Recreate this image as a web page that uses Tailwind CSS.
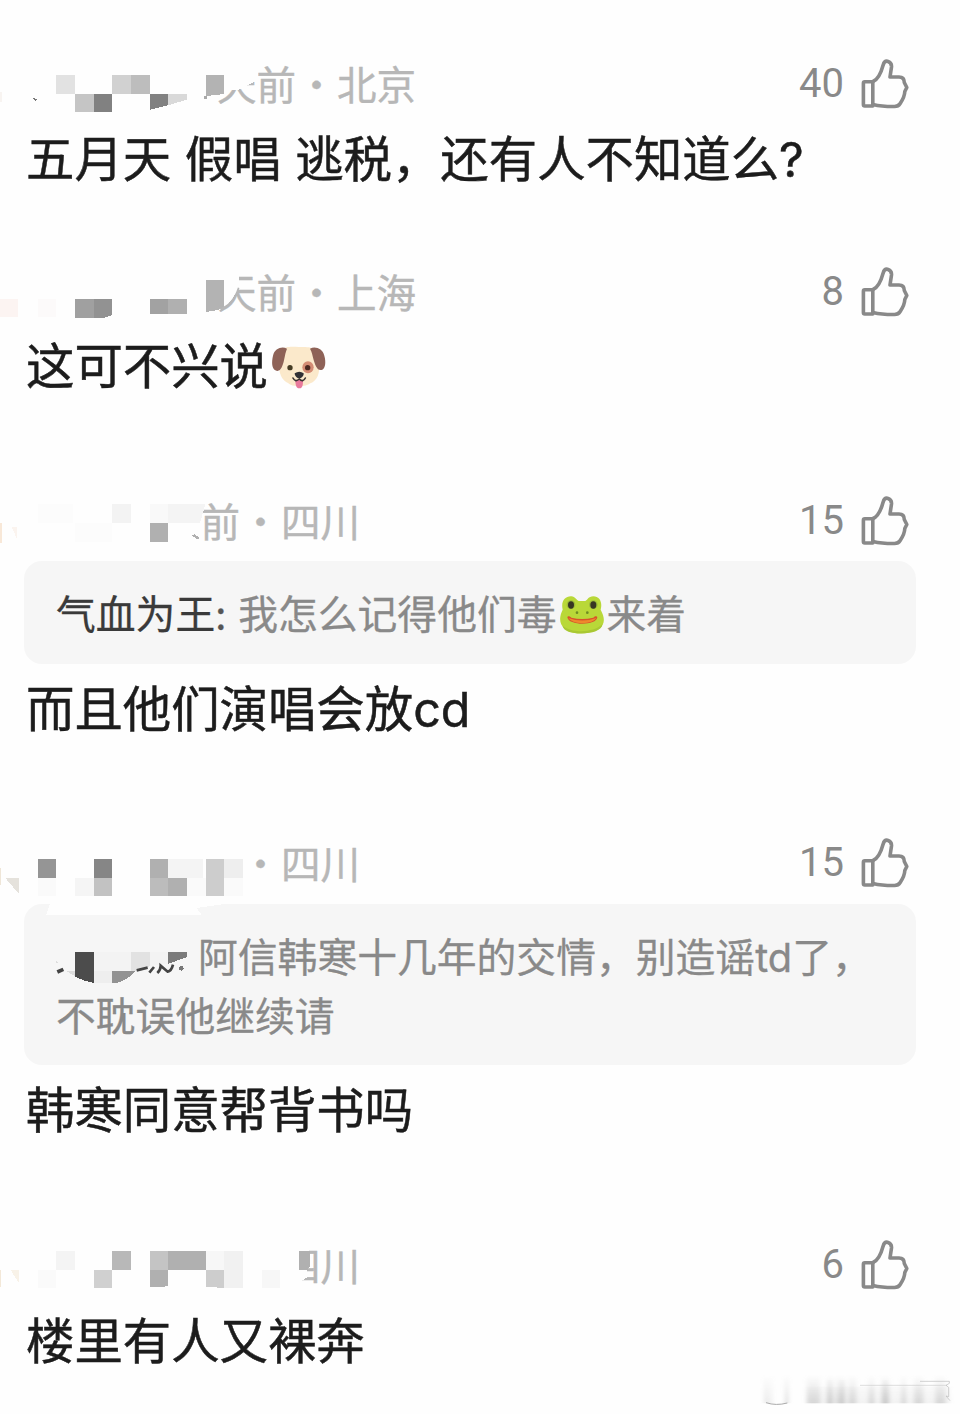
<!DOCTYPE html>
<html lang="zh-CN">

<head>
  <meta charset="UTF-8">
  <meta name="viewport" content="width=device-width, initial-scale=1.0">
  <title>评论</title>
  <script src="https://cdn.jsdelivr.net/npm/@tailwindcss/browser@4"></script>
</head>

<body class="bg-[#fefefe] font-['Noto_Sans_CJK_SC',sans-serif] text-[#1c1c1c]">

  <!-- shared like icon -->
  <svg class="hidden">
    <symbol id="thumb" viewBox="0 0 48 50">
      <g fill="none" stroke="#898989" stroke-width="3.6" stroke-linejoin="round" stroke-linecap="round">
        <path d="M3.8 22.7H11.8V47H3.8Q2.4 47 2.4 45.5V24.2Q2.4 22.7 3.8 22.7Z" />
        <path d="M12 22.5C17 20.5 20 14 22 6.5C23 2.5 24.5 1.8 26.5 2.3C29 3 30.8 4.5 30.5 8L29 18H38C41.5 18 43.3 20 43.3 23.5L45.8 28.5L43.8 32.5C43.7 37 41.5 41 39.2 44.5C37.8 46.8 36 47.5 33.5 47.5C25 47.6 18.5 47 12 45.4" />
      </g>
    </symbol>
  </svg>

  <main class="w-[960px] h-[1414px] flex flex-col overflow-hidden pt-[56px]">

    <section class="h-[208px]">
      <div class="relative h-[58px] flex items-center justify-between pr-[51px]">
        <div class="w-[416px] pb-[5px] flex justify-end text-[39.5px] leading-none text-[#b7b7b7] [-webkit-text-stroke:0.4px]">
          <span>天前</span><span class="w-[41px] text-center">·</span><span>北京</span>
        </div>
        <div class="flex items-center gap-[17px] pb-[2px]">
          <span class="font-[Roboto,sans-serif] text-[40px] leading-none text-[#898989]">40</span>
          <svg class="w-12 h-[50px]"><use href="#thumb" /></svg>
        </div>
        <svg class="absolute left-0 top-0 w-[430px] h-[58px]" viewBox="0 3 1290 174" shape-rendering="crispEdges">
          <path d="M600 0H774V76L745 90L722 103L690 106L652 132H600Z" fill="#fefefe" />
          <path d="M0 110h5v30H0z" fill="#f8f4f1" />
          <path d="M168 60h57v57h-57z" fill="#e2e2e2" />
          <path d="M225 117h57v54h-57z" fill="#c5c5c5" />
          <path d="M282 117h54v54h-54z" fill="#818181" />
          <path d="M336 60h57v57h-57z" fill="#d1d1d1" />
          <path d="M393 60h57v57h-57z" fill="#bdbdbd" />
          <path d="M450 117h54v34l-54 13z" fill="#818181" />
          <path d="M504 117h57v17l-57 17z" fill="#d9d9d9" />
          <path d="M618 60h54v57l-54 6z" fill="#b3b3b3" />
          <path d="M96 128l15 4-4 6z" fill="#777" />
          <path d="M612 124l10 0-2 8-7 -1z" fill="#aaa" />
          <path d="M752 86l10-6v4l-8 3z" fill="#bbb" />
        </svg>
      </div>
      <p class="mt-[14px] pl-[26px] h-16 leading-[64px] font-[Inter,'Noto_Sans_CJK_SC',sans-serif] text-[48.4px] [-webkit-text-stroke:0.5px] whitespace-nowrap">五月天 假唱 逃税，还有人不知道么?</p>
    </section>

    <section class="h-[229px]">
      <div class="relative h-[58px] flex items-center justify-between pr-[51px]">
        <div class="w-[416px] pb-[5px] flex justify-end text-[39.5px] leading-none text-[#b7b7b7] [-webkit-text-stroke:0.4px]">
          <span>天前</span><span class="w-[41px] text-center">·</span><span>上海</span>
        </div>
        <div class="flex items-center gap-[17px] pb-[2px]">
          <span class="font-[Roboto,sans-serif] text-[40px] leading-none text-[#898989]">8</span>
          <svg class="w-12 h-[50px]"><use href="#thumb" /></svg>
        </div>
        <svg class="absolute left-0 top-0 w-[430px] h-[58px]" viewBox="0 -3 1290 174" shape-rendering="crispEdges">
          <path d="M600 0H716V68L700 98L684 118L660 136H600Z" fill="#fefefe" />
          <path d="M0 102h54v54H0z" fill="#fcf4f2" />
          <path d="M114 102h54v54h-54z" fill="#fcfafa" />
          <path d="M225 102h57v57h-57z" fill="#a0a0a0" />
          <path d="M282 102h54v48l-24 9h-30z" fill="#929292" />
          <path d="M450 102h54v44h-54z" fill="#a2a2a2" />
          <path d="M504 102h57v44h-57z" fill="#b0b0b0" />
          <path d="M618 45h54v84l-28 8-26 4z" fill="#b3b3b3" />
          <path d="M660 132C692 122 706 98 716 68" fill="none" stroke="#b7b7b7" stroke-width="5" shape-rendering="auto" />
        </svg>
      </div>
      <div class="mt-[13px] pl-[26px] h-16 flex items-center">
        <p class="leading-[64px] font-[Inter,'Noto_Sans_CJK_SC',sans-serif] text-[48.4px] [-webkit-text-stroke:0.5px]">这可不兴说</p>
        <svg class="ml-[3px] w-[56px] h-[45px]" viewBox="32 30 168 135">
          <path d="M62 48C75 32 95 36 116 36C138 36 156 34 169 50C180 84 184 132 150 145C136 157 96 157 83 144C52 130 52 84 62 48Z" fill="#fbe9cb" />
          <ellipse cx="143" cy="97" rx="17" ry="18" fill="#d48c74" />
          <path d="M80 41C65 33 43 40 38 62C33 83 35 100 45 106C60 114 67 94 71 76C74 61 76 50 80 41Z" fill="#8e6257" />
          <path d="M149 41C164 33 187 40 192 62C198 83 194 100 186 104C171 110 165 91 160 75C156 61 155 50 149 41Z" fill="#8e6257" />
          <path d="M105 137C106 158 111 160 118 160C126 159 128 151 128 137L117 132Z" fill="#e8799c" />
          <circle cx="89" cy="98" r="8" fill="#453c24" />
          <circle cx="142" cy="98" r="8" fill="#4b2820" />
          <path d="M103 115Q117 106 130 115Q131 124 120 130H113Q103 124 103 115Z" fill="#303035" />
          <path d="M98 129Q105 143 117 132Q128 143 135 129" fill="none" stroke="#3a3432" stroke-width="5" stroke-linecap="round" />
        </svg>
      </div>
    </section>

    <section class="h-[342px]">
      <div class="relative h-[58px] flex items-center justify-between pr-[51px]">
        <div class="w-[360px] pb-[5px] flex justify-end text-[39.5px] leading-none text-[#b7b7b7] [-webkit-text-stroke:0.4px]">
          <span>前</span><span class="w-[41px] text-center">·</span><span>四川</span>
        </div>
        <div class="flex items-center gap-[17px] pb-[2px]">
          <span class="font-[Roboto,sans-serif] text-[40px] leading-none text-[#898989]">15</span>
          <svg class="w-12 h-[50px]"><use href="#thumb" /></svg>
        </div>
        <svg class="absolute left-0 top-0 w-[430px] h-[58px]" viewBox="0 9 1290 174" shape-rendering="crispEdges">
          <path d="M0 100h5v60H0z" fill="#f8e8d8" />
          <path d="M34 110h16v34z" fill="#fbf4ef" />
          <path d="M114 42h105v57H114z" fill="#fcfcfc" />
          <path d="M225 99h111v57H225z" fill="#fcfcfc" />
          <path d="M336 42h57v57h-57z" fill="#f3f3f3" />
          <path d="M450 42h54v57h-54z" fill="#f9f9f9" />
          <path d="M504 42h112l-16 57h-96z" fill="#f4f4f4" />
          <path d="M450 99h54v57h-54z" fill="#b0b0b0" />
          <path d="M574 136l10-3 12 8v7h-7l-5-6z" fill="#b0b0b0" />
        </svg>
      </div>
      <div class="mt-[10px] ml-6 w-[892px] h-[103px] px-[32px] pb-[2px] flex items-center bg-[#f6f6f6] rounded-[18px] text-[39.8px] leading-[60px] text-[#898989] [-webkit-text-stroke:0.3px]">
        <span class="text-[#3a3a3a]">气血为王</span><span class="w-[23px] text-[#555]">:</span>
        <span>我怎么记得他们毒</span>
        <svg class="mx-[2px] mt-[6px] w-[46px] h-10 shrink-0" viewBox="57 50 138 120">
          <path d="M68 94C62 68 76 53 94 54C106 55 110 66 116 68H136C142 66 145 54 160 54C179 54 188 72 182 94C196 120 194 137 180 149C157 170 96 170 74 151C57 137 57 116 68 94Z" fill="#b9d838" />
          <path d="M68 142C91 164 160 165 187 138C187 173 69 175 68 142Z" fill="#a9c833" />
          <circle cx="93" cy="79" r="13" fill="#9dbb38" />
          <circle cx="160" cy="79" r="13" fill="#9dbb38" />
          <ellipse cx="93" cy="80" rx="9" ry="11" fill="#373523" />
          <ellipse cx="160" cy="80" rx="9" ry="11" fill="#373523" />
          <path d="M82 116C84 112 90 114 94 118Q126 126 160 118C165 113 171 112 172 117C170 143 84 143 82 116Z" fill="#d8532a" />
          <path d="M85 119Q126 134 169 119Q160 134 126 135Q96 134 85 119Z" fill="#ee8a2c" />
          <circle cx="111" cy="103" r="4" fill="#6f8c22" />
          <circle cx="142" cy="103" r="4" fill="#6f8c22" />
        </svg>
        <span>来着</span>
      </div>
      <p class="mt-[14px] pl-[26px] h-16 leading-[64px] font-[Inter,'Noto_Sans_CJK_SC',sans-serif] text-[48.4px] [-webkit-text-stroke:0.5px]">而且他们演唱会放cd</p>
    </section>

    <section class="h-[402px]">
      <div class="relative h-[58px] flex items-center justify-between pr-[51px]">
        <div class="w-[360px] pb-[5px] flex justify-end text-[39.5px] leading-none text-[#b7b7b7] [-webkit-text-stroke:0.4px]">
          <span class="w-[41px] text-center">·</span><span>四川</span>
        </div>
        <div class="flex items-center gap-[17px] pb-[2px]">
          <span class="font-[Roboto,sans-serif] text-[40px] leading-none text-[#898989]">15</span>
          <svg class="w-12 h-[50px]"><use href="#thumb" /></svg>
        </div>
        <svg class="absolute left-0 top-0 w-[430px] h-[58px]" viewBox="0 -15 1290 174" shape-rendering="crispEdges" overflow="visible">
          <path d="M0 85h4v50H0z" fill="#efe6d8" />
          <path d="M16 114h41v48z" fill="#e5e2dc" />
          <path d="M114 57h54v57h-54z" fill="#959595" />
          <path d="M114 114h54v54h-54z" fill="#fafafa" />
          <path d="M225 114h57v54h-57z" fill="#f5f5f5" />
          <path d="M282 57h54v57h-54z" fill="#868686" />
          <path d="M282 114h54v54h-54z" fill="#c2c2c2" />
          <path d="M450 57h54v57h-54z" fill="#b0b0b0" />
          <path d="M504 57h104v57H504z" fill="#f4f4f4" />
          <path d="M450 114h54v54h-54z" fill="#bcbcbc" />
          <path d="M504 114h57v54h-57z" fill="#b0b0b0" />
          <path d="M561 114h57v54h-57z" fill="#fafafa" />
          <path d="M618 57h54v111h-54z" fill="#cdcdcd" />
          <path d="M672 57h57v57h-57z" fill="#eee" />
          <path d="M672 114h57v54h-57z" fill="#fafafa" />
        </svg>
      </div>
      <div class="relative mt-[11px] ml-6 w-[892px] h-[161px] px-[32px] pt-[21px] bg-[#f6f6f6] rounded-[18px] text-[39.8px] leading-[59px] text-[#898989] [-webkit-text-stroke:0.3px]">
        <p class="pl-[142px] whitespace-nowrap">阿信韩寒十几年的交情，别造谣<span class="font-[Inter,sans-serif] leading-none">td</span>了，</p>
        <p>不耽误他继续请</p>
        <!-- hidden user name -->
        <svg class="absolute left-0 top-0 w-[200px] h-[90px]" viewBox="72 12 600 270" shape-rendering="crispEdges">
          <path d="M150 12H672L590 24L605 45H138Z" fill="#fefefe" />
          <path d="M282 156h111v57H282z" fill="#f3f3f3" />
          <path d="M225 156h57v93q-32-6-57-20z" fill="#4c4c4c" />
          <path d="M168 180l8 10-8 0z" fill="#ddd" />
          <path d="M198 213h27v16z" fill="#ddd" />
          <path d="M282 213h54v36h-54z" fill="#eee" />
          <path d="M336 213h69q-28 36-69 37z" fill="#929292" />
          <path d="M393 156h57v42l-32 15h-25z" fill="#e2e2e2" />
          <path d="M450 156h54v35l-54 7z" fill="#f3f3f3" />
          <path d="M504 156h57v15l-57 21z" fill="#7b7b7b" />
          <g fill="none" stroke="#444" stroke-width="8" shape-rendering="auto">
            <path d="M172 216L190 208" stroke-width="11" />
            <path d="M410 211L443 203M448 218L462 201M472 219Q482 210 482 197L503 215Q514 214 519 194" />
          </g>
          <circle cx="544" cy="205" r="7" fill="#777" />
        </svg>
      </div>
      <p class="mt-[14px] pl-[26px] h-16 leading-[64px] font-[Inter,'Noto_Sans_CJK_SC',sans-serif] text-[48.4px] [-webkit-text-stroke:0.5px]">韩寒同意帮背书吗</p>
    </section>

    <section class="h-[136px]">
      <div class="relative h-[58px] flex items-center justify-between pr-[51px]">
        <div class="w-[360px] pb-[5px] flex justify-end text-[39.5px] leading-none text-[#b7b7b7] [-webkit-text-stroke:0.4px]">
          <span>四川</span>
        </div>
        <div class="flex items-center gap-[17px] pb-[2px]">
          <span class="font-[Roboto,sans-serif] text-[40px] leading-none text-[#898989]">6</span>
          <svg class="w-12 h-[50px]"><use href="#thumb" /></svg>
        </div>
        <svg class="absolute left-0 top-0 w-[430px] h-[58px]" viewBox="0 6 1290 174" shape-rendering="crispEdges">
          <path d="M840 20H926V98L920 106V128L904 138V160H840Z" fill="#fefefe" />
          <path d="M0 105h4v50H0z" fill="#f3e8d8" />
          <path d="M32 105h24v38z" fill="#f8f2e8" />
          <path d="M168 48h57v57h-57z" fill="#f4f4f4" />
          <path d="M114 105h54v54h-54z" fill="#fafafa" />
          <path d="M282 105h54v54h-54z" fill="#d0d0d0" />
          <path d="M336 48h57v57h-57z" fill="#b8b8b8" />
          <path d="M450 48h54v57h-54z" fill="#c4c4c4" />
          <path d="M504 48h114v57H504z" fill="#b0b0b0" />
          <path d="M450 105h54v49l-54 3z" fill="#b0b0b0" />
          <path d="M618 48h54v57h-54z" fill="#f7f7f7" />
          <path d="M618 105h54v54l-54-4z" fill="#cdcdcd" />
          <path d="M672 48h57v111h-57z" fill="#f1f1f1" />
          <path d="M786 105h54v54h-54z" fill="#f7f7f7" />
          <path d="M897 48h33v45l-8 12h-25z" fill="#b0b0b0" />
        </svg>
      </div>
      <p class="mt-[15px] pl-[26px] h-16 leading-[64px] font-[Inter,'Noto_Sans_CJK_SC',sans-serif] text-[48.4px] [-webkit-text-stroke:0.5px]">楼里有人又裸奔</p>
    </section>

    <!-- faded watermark -->
    <svg class="self-end w-[200px] h-[41px] shrink-0" viewBox="60 39 600 123">
      <defs>
        <linearGradient id="fade" x1="0" y1="45" x2="0" y2="130" gradientUnits="userSpaceOnUse">
          <stop offset="0" stop-color="#bbb" stop-opacity="0" />
          <stop offset="1" stop-color="#bbb" stop-opacity=".5" />
        </linearGradient>
        <filter id="soft" x="-10%" y="-10%" width="120%" height="120%">
          <feGaussianBlur stdDeviation="6 1" />
        </filter>
      </defs>
      <g fill="url(#fade)" filter="url(#soft)">
        <path d="M74 45h8v85h-8zM90 45h5v85h-5zM135 45h10v85h-10z" />
        <path d="M200 45h40v85h-40zM260 45h20v85h-20zM287 45h28v85h-28zM325 45h24v85h-24zM386 45h17v85h-17zM424 45h24v85h-24zM484 45h14v85h-14zM522 45h28v85h-28zM586 45h30v85h-30z" />
        <path d="M200 80h430v50H200z" opacity=".35" />
        <path d="M265 60h10v70h-10zM300 60h14v70h-14zM428 60h16v70h-16z" />
      </g>
      <g fill="none" stroke="#aaa" stroke-width="2">
        <path d="M78 128Q108 138 142 129" stroke-width="3" />
        <path d="M360 76H620" stroke="#ccc" />
        <path d="M540 64H628V70L618 76L626 82V110L618 108L630 122" stroke="#bbb" />
      </g>
    </svg>

  </main>
</body>

</html>
